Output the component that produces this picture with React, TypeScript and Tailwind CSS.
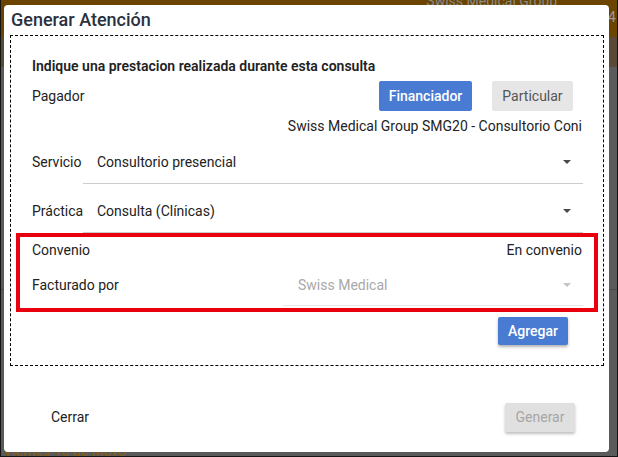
import React from 'react';

const Caret = ({ color }: { color: string }) => (
  <svg width="8" height="4" viewBox="0 0 8 4" className="shrink-0">
    <path d="M0 0 L8 0 L4 4 Z" fill={color} />
  </svg>
);

const SelectField = ({
  value,
  disabled = false,
}: {
  value: string;
  disabled?: boolean;
}) => (
  <div
    className={`flex-1 h-full flex items-center justify-between pl-[14px] pr-[12px] border-b ${
      disabled ? 'border-[#e6e6e6] text-[#a8a8a8] pl-[15px]' : 'border-[#cccccc] text-[#222]'
    }`}
  >
    <span>{value}</span>
    <Caret color={disabled ? '#c4c4c4' : '#4a4a4a'} />
  </div>
);

export default function App() {
  return (
    <div className="relative w-[618px] h-[457px] overflow-hidden bg-[#5a5a5a] border-x border-b border-[#151515] font-['Roboto',sans-serif] text-[14px]">
      {/* page behind the dialog */}
      <div className="h-[37px] bg-[#6b4400]" />
      <div className="h-[30px] bg-[#584a34]" />
      <div className="h-[223px] bg-[#5b5b5b] border-b border-[#4a4a4a]" />
      <span className="absolute right-[60px] -top-[9px] text-[14px] text-[#8a8a8a]">Swiss Medical Group</span>
      <span className="absolute right-[1px] top-[7px] text-[14px] text-[#9a9a9a]">34</span>
      <span className="absolute left-[2px] top-[441px] text-[14px] text-[#8a5c12]">Viernes 10 de Mayo</span>

      {/* dialog */}
      <div className="absolute left-[3px] top-[5px] w-[605px] h-[447px] bg-white rounded-[4px] flex flex-col">
        <h2 className="pl-[7px] pt-[4px] h-[26px] leading-[22px] text-[18px] font-medium text-[#2b3140]">
          Generar Atención
        </h2>

        <div className="mt-[4px] ml-[6px] w-[594px] border border-dashed border-black pl-[21px] pr-[20px] pt-[20px] pb-[20px] text-[#222]">
          <div className="h-[20px] leading-[20px] font-semibold text-[14px]">
            Indique una prestacion realizada durante esta consulta
          </div>

          <div className="mt-[5px] h-[30px] flex items-center justify-between">
            <span>Pagador</span>
            <div className="flex gap-[20px] mr-[10px]">
              <button className="w-[93px] h-[30px] rounded-[2px] bg-[#4a7bd2] text-white font-medium">
                Financiador
              </button>
              <button className="w-[81px] h-[30px] rounded-[2px] bg-[#e6e6e6] text-[#555]">
                Particular
              </button>
            </div>
          </div>

          <div className="mt-[5px] h-[20px] leading-[20px] text-right pr-[1px]">
            Swiss Medical Group SMG20 - Consultorio Coni
          </div>

          <div className="mt-[5px] h-[43px] flex items-center">
            <span className="w-[51px]">Servicio</span>
            <SelectField value="Consultorio presencial" />
          </div>

          <div className="mt-[6px] h-[43px] flex items-center">
            <span className="w-[51px]">Práctica</span>
            <SelectField value="Consulta (Clínicas)" />
          </div>

          <div className="-ml-[16px] -mr-[15px] border-[4px] border-[#e8000e] pl-[12px] pr-[11px] pt-[3px] pb-[2px]">
            <div className="h-[20px] leading-[20px] flex justify-between">
              <span>Convenio</span>
              <span className="mr-[1px]">En convenio</span>
            </div>
            <div className="mt-[5px] h-[41px] flex items-center">
              <span className="flex-1">Facturado por</span>
              <div className="w-[300px] h-full flex">
                <SelectField value="Swiss Medical" disabled />
              </div>
            </div>
          </div>

          <div className="mt-[5px] flex justify-end pr-[15px]">
            <button className="w-[70px] h-[28px] rounded-[2px] bg-[#4a7bd2] text-white font-medium shadow-[0_2px_3px_rgba(0,0,0,0.3)]">
              Agregar
            </button>
          </div>
        </div>

        <div className="mt-[37px] flex items-center justify-between">
          <button className="ml-[31px] px-[16px] h-[29px] text-[#222]">Cerrar</button>
          <button className="mr-[34px] w-[70px] h-[29px] rounded-[2px] bg-[#e0e0e0] text-[#a6a6a6] shadow-[0_2px_3px_rgba(0,0,0,0.25)]">
            Generar
          </button>
        </div>
      </div>
    </div>
  );
}
